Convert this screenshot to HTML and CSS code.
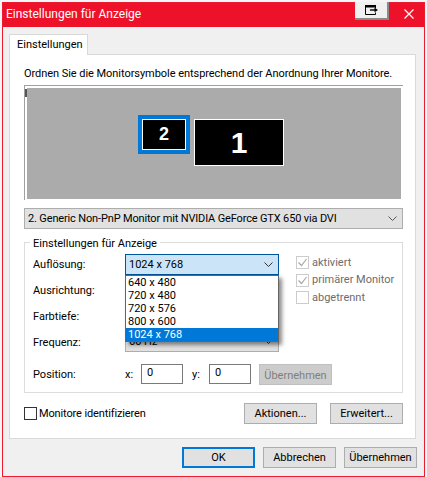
FILE: index.html
```html
<!DOCTYPE html>
<html lang="de">
<head>
    <meta charset="UTF-8">
    <title>Einstellungen für Anzeige</title>
    <link rel="stylesheet" href="styles.css">
</head>
<body>
    <div class="window">
        <div class="titlebar">
            <span class="title">Einstellungen für Anzeige</span>
            <div class="pin-button">
                <svg width="13" height="10" viewBox="0 0 13 10">
                    <path d="M0 0h11v2.5H0z" fill="#000"/>
                    <path d="M.5 2v7.5h10V7.5M10.5 2v1.5" fill="none" stroke="#000"/>
                    <path d="M5 5h5" stroke="#000" stroke-width="1.4"/>
                    <path d="M9.5 2.8L13 5 9.5 7.2z" fill="#000"/>
                </svg>
            </div>
            <svg class="close-icon" width="10" height="10" viewBox="0 0 10 10">
                <path d="M.5.5l9 9M9.5.5l-9 9" stroke="#fff" stroke-width="1.2"/>
            </svg>
        </div>

        <div class="content">
            <div class="tab">Einstellungen</div>
            <div class="panel">
                <p class="hint">Ordnen Sie die Monitorsymbole entsprechend der Anordnung Ihrer Monitore.</p>

                <div class="monitor-frame">
                    <div class="monitor-canvas">
                        <div class="monitor monitor-two selected">2</div>
                        <div class="monitor monitor-one">1</div>
                    </div>
                </div>

                <div class="combo monitor-select">
                    <span>2. Generic Non-PnP Monitor mit NVIDIA GeForce GTX 650 via DVI</span>
                    <svg class="chevron" width="9" height="5" viewBox="0 0 9 5"><path d="M.5.5l4 4 4-4" fill="none" stroke="#555"/></svg>
                </div>

                <div class="group">
                    <div class="legend">Einstellungen für Anzeige</div>
                    <div class="group-top">
                        <div class="fields">
                            <div class="field">
                                <label>Auflösung:</label>
                                <div class="combo open">
                                    <span>1024 x 768</span>
                                    <svg class="chevron" width="9" height="5" viewBox="0 0 9 5"><path d="M.5.5l4 4 4-4" fill="none" stroke="#333"/></svg>
                                </div>
                                <ul class="dropdown">
                                    <li>640 x 480</li>
                                    <li>720 x 480</li>
                                    <li>720 x 576</li>
                                    <li>800 x 600</li>
                                    <li class="active">1024 x 768</li>
                                </ul>
                            </div>
                            <div class="field"><label>Ausrichtung:</label></div>
                            <div class="field"><label>Farbtiefe:</label></div>
                            <div class="field">
                                <label>Frequenz:</label>
                                <div class="combo frequency">
                                    <span>60 Hz</span>
                                    <svg class="chevron" width="9" height="5" viewBox="0 0 9 5"><path d="M.5.5l4 4 4-4" fill="none" stroke="#333"/></svg>
                                </div>
                            </div>
                        </div>
                        <div class="checks">
                            <div class="check-row">
                                <span class="check disabled"><svg width="11" height="11" viewBox="0 0 11 11"><path d="M1.5 5.5l3 3 5-6.5" fill="none" stroke="#a8a8a8" stroke-width="1.2"/></svg></span>
                                <span>aktiviert</span>
                            </div>
                            <div class="check-row">
                                <span class="check disabled"><svg width="11" height="11" viewBox="0 0 11 11"><path d="M1.5 5.5l3 3 5-6.5" fill="none" stroke="#a8a8a8" stroke-width="1.2"/></svg></span>
                                <span>primärer Monitor</span>
                            </div>
                            <div class="check-row">
                                <span class="check disabled"></span>
                                <span>abgetrennt</span>
                            </div>
                        </div>
                    </div>
                    <div class="position-row">
                        <label>Position:</label>
                        <span class="axis axis-x">x:</span>
                        <div class="num-input">0</div>
                        <span class="axis axis-y">y:</span>
                        <div class="num-input">0</div>
                        <button class="btn btn-disabled">Übernehmen</button>
                    </div>
                </div>

                <div class="panel-actions">
                    <div class="identify"><span class="check"></span>Monitore identifizieren</div>
                    <button class="btn">Aktionen...</button>
                    <button class="btn">Erweitert...</button>
                </div>
            </div>

            <div class="dialog-buttons">
                <button class="btn btn-default">OK</button>
                <button class="btn">Abbrechen</button>
                <button class="btn">Übernehmen</button>
            </div>
        </div>
    </div>
</body>
</html>
```

FILE: styles.css
```css
* {
    box-sizing: border-box;
}
html, body {
    margin: 0;
    padding: 0;
    height: 100%;
    overflow: hidden;
}
body {
    background-color: #f4f6f8;
    font-family: 'Roboto', 'Open Sans', sans-serif;
    font-size: 11px;
    line-height: 14px;
    color: #000;
}
.window {
    width: 423px;
    height: 475px;
    margin: 2px 0 0 2px;
    border: 1px solid #ec1b30;
    background-color: #f0f0f0;
    display: flex;
    flex-direction: column;
}
.titlebar {
    height: 24px;
    flex-shrink: 0;
    background-color: #ed1229;
    color: #fff;
    display: flex;
    align-items: flex-start;
    padding-left: 3px;
    position: relative;
}
.title {
    font-size: 12px;
    line-height: 23px;
}
.pin-button {
    position: absolute;
    left: 352px;
    top: -1px;
    width: 34px;
    height: 18px;
    background-color: #f0f0f0;
    border-right: 2px solid #8a8a8a;
    border-bottom: 2px solid #8a8a8a;
    display: flex;
    align-items: center;
    justify-content: center;
}
.close-icon {
    position: absolute;
    left: 401px;
    top: 6px;
}
.content {
    flex: 1;
    padding: 7px 7px 0 6px;
    display: flex;
    flex-direction: column;
}
.tab {
    width: 79px;
    height: 21px;
    background-color: #fff;
    border: 1px solid #d9d9d9;
    border-bottom: none;
    padding: 3px 0 0 7px;
    margin-bottom: -1px;
    position: relative;
    z-index: 1;
}
.panel {
    width: 407px;
    height: 385px;
    background-color: #fff;
    border: 1px solid #d9d9d9;
    padding: 12px 11px 0 14px;
}
.hint {
    margin: 0 0 4px 0;
    height: 14px;
    white-space: nowrap;
    letter-spacing: -0.05px;
}
.monitor-frame {
    width: 379px;
    height: 115px;
    border-top: 1px solid #a0a0a0;
    border-left: 1px solid #a0a0a0;
    padding: 2px 2px 1px 2px;
}
.monitor-canvas {
    height: 111px;
    background-color: #ababab;
    position: relative;
}
/* clipped label remnant at the top left of the canvas */
.monitor-canvas::before {
    content: "";
    position: absolute;
    left: -2px;
    top: 1px;
    width: 2px;
    height: 8px;
    background-color: #555;
}
.monitor {
    position: absolute;
    background-color: #000;
    border: 1px solid #fff;
    color: #fff;
    font-family: 'Liberation Sans', sans-serif;
    font-weight: bold;
    display: flex;
    align-items: center;
    justify-content: center;
}
.monitor-two {
    left: 115px;
    top: 31px;
    width: 44px;
    height: 31px;
    font-size: 18px;
    padding-bottom: 2px;
}
.monitor-two.selected {
    outline: 4px solid #0078d7;
}
.monitor-one {
    left: 167px;
    top: 31px;
    width: 90px;
    height: 47px;
    font-size: 30px;
}
.combo {
    height: 21px;
    background-color: #e1e1e1;
    border: 1px solid #adadad;
    display: flex;
    align-items: center;
    justify-content: space-between;
    padding: 0 5px 0 3px;
    white-space: nowrap;
}
.monitor-select {
    width: 379px;
    margin-top: 8px;
    letter-spacing: -0.15px;
}
.group {
    width: 379px;
    height: 151px;
    margin-top: 13px;
    border: 1px solid #dcdcdc;
    position: relative;
    padding: 11px 0 0 8px;
}
.legend {
    position: absolute;
    left: 5px;
    top: -6px;
    background-color: #fff;
    padding: 0 3px;
}
.group-top {
    display: flex;
    height: 100px;
}
.fields {
    width: 263px;
    display: flex;
    flex-direction: column;
    gap: 5px;
}
.field {
    height: 21px;
    display: flex;
    align-items: center;
    position: relative;
}
.field label {
    width: 92px;
    flex-shrink: 0;
    margin-top: 1px;
}
.field .combo {
    width: 154px;
}
.combo.frequency {
    margin-top: -2px;
}
.combo.open {
    background-color: #cce4f7;
    border-color: #005499;
}
.dropdown {
    position: absolute;
    left: 92px;
    top: 21px;
    width: 154px;
    height: 67px;
    margin: 0;
    padding: 0;
    list-style: none;
    background-color: #fff;
    border: 1px solid #646464;
    box-shadow: 3px 3px 4px rgba(0, 0, 0, 0.45);
    z-index: 2;
}
.dropdown li {
    height: 13px;
    line-height: 13px;
    padding-left: 2px;
}
.dropdown li.active {
    background-color: #0078d7;
    color: #fff;
}
.checks {
    display: flex;
    flex-direction: column;
    color: #6d6d6d;
    white-space: nowrap;
}
.check-row {
    height: 17.5px;
    display: flex;
    align-items: center;
    gap: 3px;
    line-height: 16px;
}
.check {
    width: 13px;
    height: 13px;
    background-color: #fff;
    border: 1px solid #333;
    flex-shrink: 0;
    display: inline-flex;
}
.check.disabled {
    border-color: #cccccc;
}
.position-row {
    display: flex;
    align-items: flex-start;
    height: 20px;
    margin-top: 10px;
    line-height: 22px;
}
.position-row label {
    width: 92px;
}
.axis-x {
    width: 16px;
}
.axis-y {
    width: 17px;
    margin-left: 9px;
}
.num-input {
    width: 42px;
    height: 20px;
    border: 1px solid #7a7a7a;
    background-color: #fff;
    padding-left: 5px;
    line-height: 16px;
}
.btn {
    width: 73px;
    height: 21px;
    padding: 0;
    background-color: #e1e1e1;
    border: 1px solid #adadad;
    border-radius: 0;
    font: inherit;
    color: #000;
}
.btn-disabled {
    margin-left: 8px;
    background-color: #cccccc;
    border-color: #bfbfbf;
    color: #7f7f7f;
}
.btn-default {
    border: 2px solid #0078d7;
}
.panel-actions {
    display: flex;
    align-items: center;
    margin-top: 10px;
    gap: 13px;
}
.identify {
    display: flex;
    align-items: center;
    gap: 2px;
    width: 207px;
    letter-spacing: -0.13px;
}
.dialog-buttons {
    display: flex;
    justify-content: flex-end;
    gap: 8px;
    margin-top: 8px;
}
```
